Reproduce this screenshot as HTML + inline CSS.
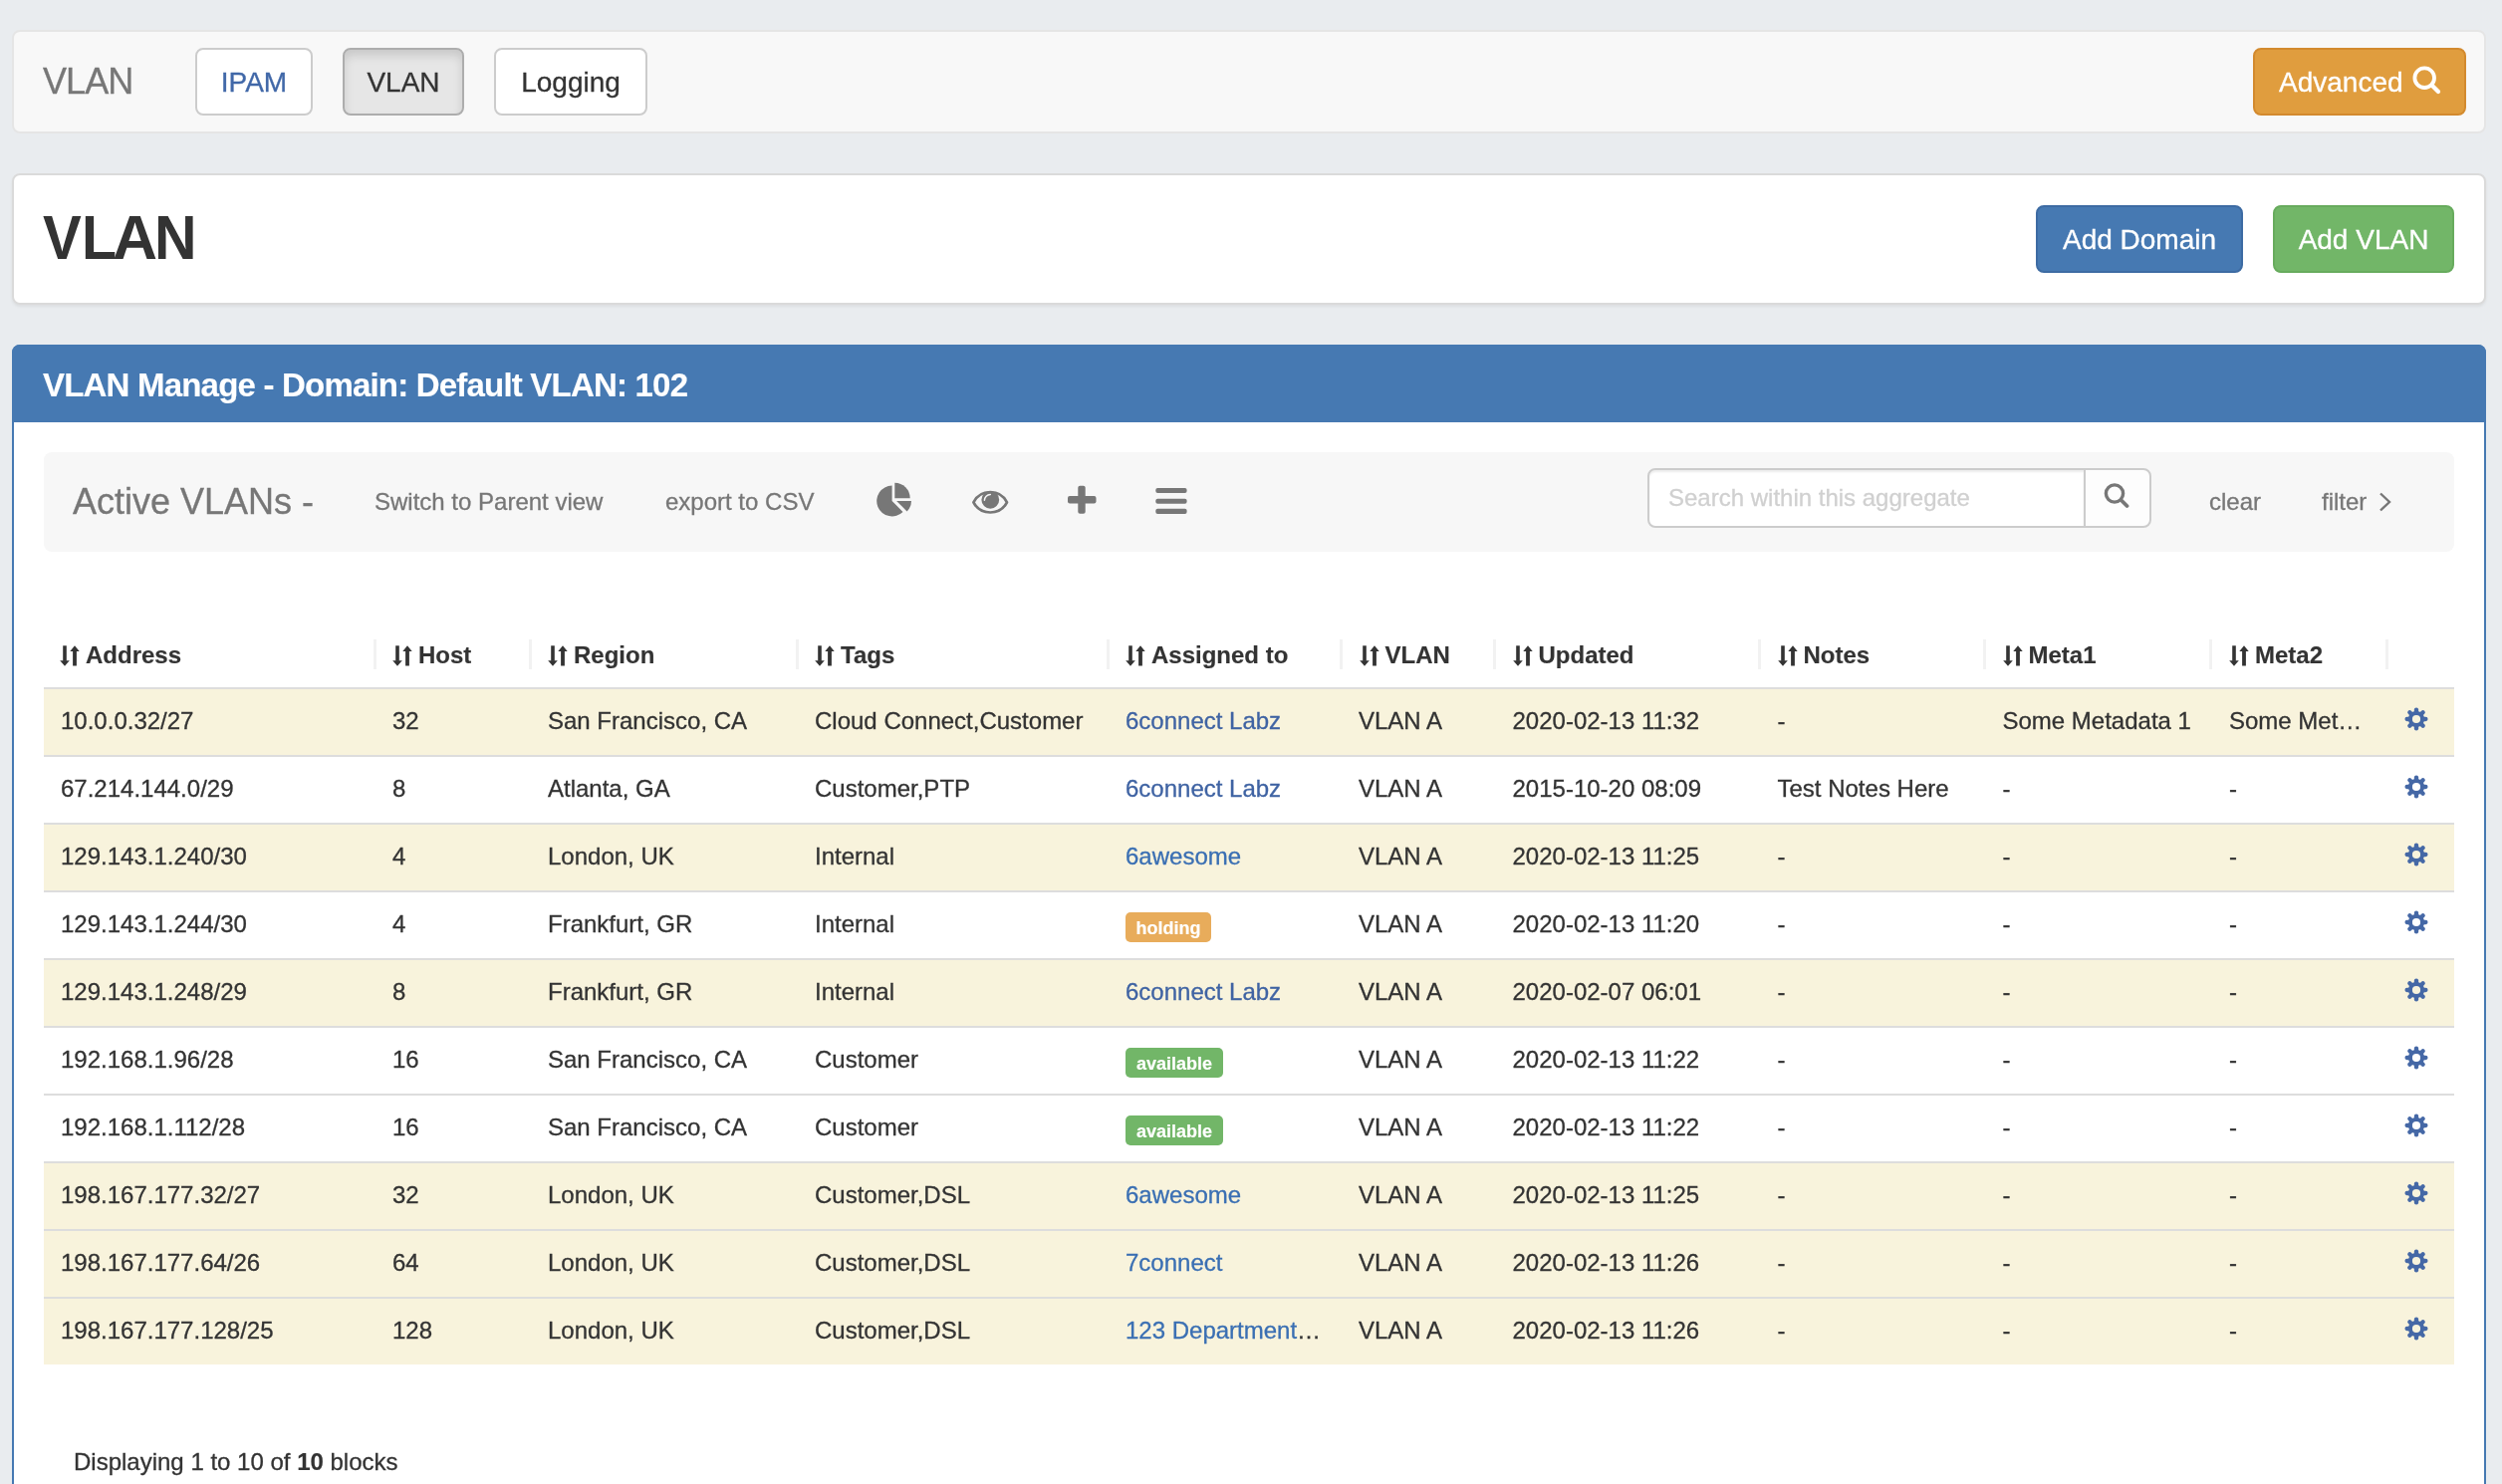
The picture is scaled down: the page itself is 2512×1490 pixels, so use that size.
<!DOCTYPE html>
<html><head><meta charset="utf-8"><title>VLAN</title>
<style>
*{box-sizing:border-box}
html,body{margin:0;padding:0}
body{-webkit-text-stroke:0.3px;will-change:transform;width:2512px;height:1490px;overflow:hidden;background:#e9ecef;font-family:"Liberation Sans",sans-serif;color:#333;position:relative}
.abs{position:absolute}
.t{position:absolute;white-space:nowrap}
.navbar{left:12px;top:30px;width:2484px;height:104px;background:#f8f8f8;border:2px solid #e5e5e5;border-radius:8px}
.brand{left:43px;top:57px;font-size:36px;line-height:50px;color:#777;letter-spacing:-0.9px}
.btn{position:absolute;height:68px;border:2px solid #ccc;border-radius:8px;background:#fff;font-size:28px;line-height:66px;text-align:center;color:#333;white-space:nowrap}
.wellp{left:12px;top:174px;width:2484px;height:132px;background:#fff;border:2px solid #dadada;border-radius:8px;box-shadow:0 2px 3px rgba(0,0,0,.06)}
.h1{top:198px;font-size:63px;line-height:80px;font-weight:bold;color:#333;transform-origin:0 0}
.panel{left:12px;top:346px;width:2484px;height:1300px;background:#fff;border:2px solid #4679b2;border-radius:8px}
.phead{left:12px;top:346px;width:2484px;height:78px;background:#4679b2;border-radius:8px 8px 0 0}
.ptitle{left:43px;top:362px;font-size:33px;line-height:50px;font-weight:bold;color:#fff;letter-spacing:-0.8px}
.toolbar{left:44px;top:454px;width:2420px;height:100px;background:#f7f7f7;border-radius:8px}
.tb{font-size:24px;line-height:40px;color:#777}
.th{position:absolute;white-space:nowrap;font-size:24px;line-height:40px;font-weight:bold;color:#333}
.th .si{position:absolute;left:0;top:9px}
.sep{position:absolute;top:642px;width:3px;height:30px;background:#f2f2f2}
.row{position:absolute;left:44px;width:2420px;height:66px}
.ry{background:#f8f3dc}
.rw{background:#fff}
.rl{position:absolute;left:44px;width:2420px;height:2px;background:#ddd}
.td{position:absolute;white-space:nowrap;font-size:24px;line-height:40px;color:#333}
.lnk{color:#3f63a3}
.lnk2{color:#3a6fb3}
.lbl{position:absolute;height:30px;border-radius:5px;color:#fff;font-weight:bold;font-size:18px;line-height:32px;text-align:center;white-space:nowrap}
.gear{position:absolute}
.th,.ptitle,.lbl,b{-webkit-text-stroke:0.15px}
.h1{-webkit-text-stroke:0}
</style></head>
<body>
<!-- NAVBAR -->
<div class="abs navbar"></div>
<div class="t brand">VLAN</div>
<div class="btn" style="left:196px;top:48px;width:118px;color:#4168a8">IPAM</div>
<div class="btn" style="left:344px;top:48px;width:122px;background:#e6e6e6;border-color:#adadad;box-shadow:inset 0 6px 10px rgba(0,0,0,.125)">VLAN</div>
<div class="btn" style="left:496px;top:48px;width:154px">Logging</div>
<div class="btn" style="left:2262px;top:48px;width:214px;background:#e09d3e;border-color:#d38a2e;color:#fff;text-align:left;padding-left:24px">Advanced</div>

<!-- TITLE WELL -->
<div class="abs wellp"></div>
<div class="t h1" style="left:42.5px;transform:scaleX(0.922)">V</div><div class="t h1" style="left:81.5px;transform:scaleX(0.911)">L</div><div class="t h1" style="left:112.6px;transform:scaleX(0.99)">A</div><div class="t h1" style="left:155.2px;transform:scaleX(0.936)">N</div>
<div class="btn" style="left:2044px;top:206px;width:208px;background:#4679b2;border-color:#3d6ba3;color:#fff">Add Domain</div>
<div class="btn" style="left:2282px;top:206px;width:182px;background:#72b668;border-color:#67ab5d;color:#fff">Add VLAN</div>

<!-- PANEL -->
<div class="abs panel"></div>
<div class="abs phead"></div>
<div class="t ptitle">VLAN Manage - Domain: Default VLAN: 102</div>
<div class="abs toolbar"></div>
<div class="t" style="left:73px;top:479px;font-size:36px;line-height:50px;color:#777">Active VLANs -</div>
<div class="t tb" style="left:376px;top:484px">Switch to Parent view</div>
<div class="t tb" style="left:668px;top:484px">export to CSV</div>

<svg width="0" height="0" style="position:absolute"><defs>
<g id="sorti" fill="#333"><rect x="3.2" y="0.3" width="3.6" height="15.5"/><polygon points="0.2,15.3 9.8,15.3 5,20.8"/><rect x="13.1" y="5.5" width="3.8" height="15"/><polygon points="10.3,5.9 19.7,5.9 15,0.3"/></g>
<g id="geari" stroke="#4568a6" fill="none"><circle cx="12" cy="12" r="6.1" stroke-width="4"/><g stroke-width="4.3" stroke-linecap="round"><line x1="12" y1="5" x2="12" y2="2.6"/><line x1="12" y1="19" x2="12" y2="21.4"/><line x1="5" y1="12" x2="2.6" y2="12"/><line x1="19" y1="12" x2="21.4" y2="12"/><line x1="7.05" y1="7.05" x2="5.35" y2="5.35"/><line x1="16.95" y1="16.95" x2="18.65" y2="18.65"/><line x1="16.95" y1="7.05" x2="18.65" y2="5.35"/><line x1="7.05" y1="16.95" x2="5.35" y2="18.65"/></g></g>
</defs></svg>
<!-- TOOLBAR ICONS -->
<svg class="abs" style="left:878px;top:483px" width="40" height="38" viewBox="0 0 40 38">
 <path fill="#777" d="M17.6,20 L17.6,4.6 A15.4,15.4 0 1 0 28.5,30.9 Z"/>
 <path fill="#777" d="M20.3,17.2 L20.3,1.8 A15.4,15.4 0 0 1 35.7,17.2 Z"/>
 <path fill="#777" d="M22.1,19.9 L37,19.9 A14.9,14.9 0 0 1 32.6,30.4 Z"/>
</svg>
<svg class="abs" style="left:974px;top:490px" width="40" height="28" viewBox="0 0 40 28">
 <path fill="none" stroke="#777" stroke-width="2.7" stroke-linejoin="round" d="M3.4,14.3 C10.5,0.8 30,0.8 37,14.3 C30,27.9 10.5,27.9 3.4,14.3 Z"/>
 <circle cx="20.3" cy="11.8" r="8.9" fill="#777"/>
 <path fill="none" stroke="#f7f7f7" stroke-width="1.5" stroke-linecap="round" d="M14.4,12.3 A6,6 0 0 1 20.3,6.4"/>
</svg>
<svg class="abs" style="left:1070px;top:486px" width="32" height="32" viewBox="0 0 32 32">
 <rect x="12.3" y="1.7" width="7.4" height="28" rx="2" fill="#777"/>
 <rect x="2" y="12" width="28.5" height="7.6" rx="2" fill="#777"/>
</svg>
<svg class="abs" style="left:1158px;top:488px" width="36" height="30" viewBox="0 0 36 30">
 <rect x="2.3" y="2" width="31.3" height="5.1" rx="2" fill="#777"/>
 <rect x="2.3" y="12.7" width="31.3" height="5" rx="2" fill="#777"/>
 <rect x="2.3" y="22.8" width="31.3" height="5.1" rx="2" fill="#777"/>
</svg>
<!-- SEARCH -->
<div class="abs" style="left:1654px;top:470px;width:440px;height:60px;background:#fff;border:2px solid #ccc;border-radius:8px 0 0 8px;box-shadow:inset 0 2px 2px rgba(0,0,0,.075)"></div>
<div class="t" style="left:1675px;top:480px;font-size:24px;line-height:40px;color:#d0d0d0">Search within this aggregate</div>
<div class="abs" style="left:2092px;top:470px;width:68px;height:60px;background:#fdfdfd;border:2px solid #ccc;border-radius:0 8px 8px 0"></div>
<svg class="abs" style="left:2110px;top:483px" width="32" height="30" viewBox="0 0 32 30">
 <circle cx="13" cy="12.5" r="8.6" fill="none" stroke="#777" stroke-width="3.4"/>
 <line x1="19.5" y1="19" x2="25.5" y2="25" stroke="#777" stroke-width="3.8" stroke-linecap="round"/>
</svg>
<div class="t tb" style="left:2218px;top:484px">clear</div>
<div class="t tb" style="left:2331px;top:484px">filter</div>
<svg class="abs" style="left:2386px;top:492px" width="18" height="24" viewBox="0 0 18 24">
 <polyline points="4,3.5 13,12 4,20.5" fill="none" stroke="#777" stroke-width="2.4"/>
</svg>
<!-- ADV ICON -->
<svg class="abs" style="left:2419px;top:63px" width="36" height="36" viewBox="0 0 36 36">
 <circle cx="15.2" cy="15.2" r="9.8" fill="none" stroke="#fff" stroke-width="3.8"/>
 <line x1="22.5" y1="22.5" x2="29" y2="29" stroke="#fff" stroke-width="4.2" stroke-linecap="round"/>
</svg>
<!--TABLE-->
<div class="th" style="left:61px;top:638px"><svg class="si" width="20" height="21" viewBox="0 0 20 21" style="left:-1px;top:10px"><use href="#sorti"/></svg><span style="margin-left:25px">Address</span></div>
<div class="th" style="left:395px;top:638px"><svg class="si" width="20" height="21" viewBox="0 0 20 21" style="left:-1px;top:10px"><use href="#sorti"/></svg><span style="margin-left:25px">Host</span></div>
<div class="th" style="left:551px;top:638px"><svg class="si" width="20" height="21" viewBox="0 0 20 21" style="left:-1px;top:10px"><use href="#sorti"/></svg><span style="margin-left:25px">Region</span></div>
<div class="th" style="left:819px;top:638px"><svg class="si" width="20" height="21" viewBox="0 0 20 21" style="left:-1px;top:10px"><use href="#sorti"/></svg><span style="margin-left:25px">Tags</span></div>
<div class="th" style="left:1131px;top:638px"><svg class="si" width="20" height="21" viewBox="0 0 20 21" style="left:-1px;top:10px"><use href="#sorti"/></svg><span style="margin-left:25px">Assigned to</span></div>
<div class="th" style="left:1365.5px;top:638px"><svg class="si" width="20" height="21" viewBox="0 0 20 21" style="left:-1px;top:10px"><use href="#sorti"/></svg><span style="margin-left:25px">VLAN</span></div>
<div class="th" style="left:1519.5px;top:638px"><svg class="si" width="20" height="21" viewBox="0 0 20 21" style="left:-1px;top:10px"><use href="#sorti"/></svg><span style="margin-left:25px">Updated</span></div>
<div class="th" style="left:1785.5px;top:638px"><svg class="si" width="20" height="21" viewBox="0 0 20 21" style="left:-1px;top:10px"><use href="#sorti"/></svg><span style="margin-left:25px">Notes</span></div>
<div class="th" style="left:2011.5px;top:638px"><svg class="si" width="20" height="21" viewBox="0 0 20 21" style="left:-1px;top:10px"><use href="#sorti"/></svg><span style="margin-left:25px">Meta1</span></div>
<div class="th" style="left:2239px;top:638px"><svg class="si" width="20" height="21" viewBox="0 0 20 21" style="left:-1px;top:10px"><use href="#sorti"/></svg><span style="margin-left:25px">Meta2</span></div>
<div class="sep" style="left:375px"></div>
<div class="sep" style="left:530.5px"></div>
<div class="sep" style="left:798.6px"></div>
<div class="sep" style="left:1110.6px"></div>
<div class="sep" style="left:1344.6px"></div>
<div class="sep" style="left:1498.7px"></div>
<div class="sep" style="left:1764.5px"></div>
<div class="sep" style="left:1990.5px"></div>
<div class="sep" style="left:2218.3px"></div>
<div class="sep" style="left:2394.5px"></div>
<div class="abs" style="left:44px;top:690px;width:2420px;height:2px;background:#ddd"></div>
<div class="row ry" style="top:692px"></div>
<div class="td" style="left:61px;top:704px">10.0.0.32/27</div>
<div class="td" style="left:394px;top:704px">32</div>
<div class="td" style="left:550px;top:704px">San Francisco, CA</div>
<div class="td" style="left:818px;top:704px">Cloud Connect,Customer</div>
<div class="td lnk" style="left:1130px;top:704px">6connect Labz</div>
<div class="td" style="left:1364px;top:704px">VLAN A</div>
<div class="td" style="left:1518.5px;top:704px">2020-02-13 11:32</div>
<div class="td" style="left:1784.5px;top:704px">-</div>
<div class="td" style="left:2010.5px;top:704px">Some Metadata 1</div>
<div class="td" style="left:2238px;top:704px">Some Met…</div>
<svg class="gear" style="left:2414px;top:710px" width="24" height="24" viewBox="0 0 24 24"><use href="#geari"/></svg>
<div class="row rw" style="top:760px"></div>
<div class="rl" style="top:758px"></div>
<div class="td" style="left:61px;top:772px">67.214.144.0/29</div>
<div class="td" style="left:394px;top:772px">8</div>
<div class="td" style="left:550px;top:772px">Atlanta, GA</div>
<div class="td" style="left:818px;top:772px">Customer,PTP</div>
<div class="td lnk" style="left:1130px;top:772px">6connect Labz</div>
<div class="td" style="left:1364px;top:772px">VLAN A</div>
<div class="td" style="left:1518.5px;top:772px">2015-10-20 08:09</div>
<div class="td" style="left:1784.5px;top:772px">Test Notes Here</div>
<div class="td" style="left:2010.5px;top:772px">-</div>
<div class="td" style="left:2238px;top:772px">-</div>
<svg class="gear" style="left:2414px;top:778px" width="24" height="24" viewBox="0 0 24 24"><use href="#geari"/></svg>
<div class="row ry" style="top:828px"></div>
<div class="rl" style="top:826px"></div>
<div class="td" style="left:61px;top:840px">129.143.1.240/30</div>
<div class="td" style="left:394px;top:840px">4</div>
<div class="td" style="left:550px;top:840px">London, UK</div>
<div class="td" style="left:818px;top:840px">Internal</div>
<div class="td lnk2" style="left:1130px;top:840px">6awesome</div>
<div class="td" style="left:1364px;top:840px">VLAN A</div>
<div class="td" style="left:1518.5px;top:840px">2020-02-13 11:25</div>
<div class="td" style="left:1784.5px;top:840px">-</div>
<div class="td" style="left:2010.5px;top:840px">-</div>
<div class="td" style="left:2238px;top:840px">-</div>
<svg class="gear" style="left:2414px;top:846px" width="24" height="24" viewBox="0 0 24 24"><use href="#geari"/></svg>
<div class="row rw" style="top:896px"></div>
<div class="rl" style="top:894px"></div>
<div class="td" style="left:61px;top:908px">129.143.1.244/30</div>
<div class="td" style="left:394px;top:908px">4</div>
<div class="td" style="left:550px;top:908px">Frankfurt, GR</div>
<div class="td" style="left:818px;top:908px">Internal</div>
<div class="lbl" style="left:1130px;top:916px;width:86px;background:#e8ac5b">holding</div>
<div class="td" style="left:1364px;top:908px">VLAN A</div>
<div class="td" style="left:1518.5px;top:908px">2020-02-13 11:20</div>
<div class="td" style="left:1784.5px;top:908px">-</div>
<div class="td" style="left:2010.5px;top:908px">-</div>
<div class="td" style="left:2238px;top:908px">-</div>
<svg class="gear" style="left:2414px;top:914px" width="24" height="24" viewBox="0 0 24 24"><use href="#geari"/></svg>
<div class="row ry" style="top:964px"></div>
<div class="rl" style="top:962px"></div>
<div class="td" style="left:61px;top:976px">129.143.1.248/29</div>
<div class="td" style="left:394px;top:976px">8</div>
<div class="td" style="left:550px;top:976px">Frankfurt, GR</div>
<div class="td" style="left:818px;top:976px">Internal</div>
<div class="td lnk" style="left:1130px;top:976px">6connect Labz</div>
<div class="td" style="left:1364px;top:976px">VLAN A</div>
<div class="td" style="left:1518.5px;top:976px">2020-02-07 06:01</div>
<div class="td" style="left:1784.5px;top:976px">-</div>
<div class="td" style="left:2010.5px;top:976px">-</div>
<div class="td" style="left:2238px;top:976px">-</div>
<svg class="gear" style="left:2414px;top:982px" width="24" height="24" viewBox="0 0 24 24"><use href="#geari"/></svg>
<div class="row rw" style="top:1032px"></div>
<div class="rl" style="top:1030px"></div>
<div class="td" style="left:61px;top:1044px">192.168.1.96/28</div>
<div class="td" style="left:394px;top:1044px">16</div>
<div class="td" style="left:550px;top:1044px">San Francisco, CA</div>
<div class="td" style="left:818px;top:1044px">Customer</div>
<div class="lbl" style="left:1130px;top:1052px;width:98px;background:#72b668">available</div>
<div class="td" style="left:1364px;top:1044px">VLAN A</div>
<div class="td" style="left:1518.5px;top:1044px">2020-02-13 11:22</div>
<div class="td" style="left:1784.5px;top:1044px">-</div>
<div class="td" style="left:2010.5px;top:1044px">-</div>
<div class="td" style="left:2238px;top:1044px">-</div>
<svg class="gear" style="left:2414px;top:1050px" width="24" height="24" viewBox="0 0 24 24"><use href="#geari"/></svg>
<div class="row rw" style="top:1100px"></div>
<div class="rl" style="top:1098px"></div>
<div class="td" style="left:61px;top:1112px">192.168.1.112/28</div>
<div class="td" style="left:394px;top:1112px">16</div>
<div class="td" style="left:550px;top:1112px">San Francisco, CA</div>
<div class="td" style="left:818px;top:1112px">Customer</div>
<div class="lbl" style="left:1130px;top:1120px;width:98px;background:#72b668">available</div>
<div class="td" style="left:1364px;top:1112px">VLAN A</div>
<div class="td" style="left:1518.5px;top:1112px">2020-02-13 11:22</div>
<div class="td" style="left:1784.5px;top:1112px">-</div>
<div class="td" style="left:2010.5px;top:1112px">-</div>
<div class="td" style="left:2238px;top:1112px">-</div>
<svg class="gear" style="left:2414px;top:1118px" width="24" height="24" viewBox="0 0 24 24"><use href="#geari"/></svg>
<div class="row ry" style="top:1168px"></div>
<div class="rl" style="top:1166px"></div>
<div class="td" style="left:61px;top:1180px">198.167.177.32/27</div>
<div class="td" style="left:394px;top:1180px">32</div>
<div class="td" style="left:550px;top:1180px">London, UK</div>
<div class="td" style="left:818px;top:1180px">Customer,DSL</div>
<div class="td lnk2" style="left:1130px;top:1180px">6awesome</div>
<div class="td" style="left:1364px;top:1180px">VLAN A</div>
<div class="td" style="left:1518.5px;top:1180px">2020-02-13 11:25</div>
<div class="td" style="left:1784.5px;top:1180px">-</div>
<div class="td" style="left:2010.5px;top:1180px">-</div>
<div class="td" style="left:2238px;top:1180px">-</div>
<svg class="gear" style="left:2414px;top:1186px" width="24" height="24" viewBox="0 0 24 24"><use href="#geari"/></svg>
<div class="row ry" style="top:1236px"></div>
<div class="rl" style="top:1234px"></div>
<div class="td" style="left:61px;top:1248px">198.167.177.64/26</div>
<div class="td" style="left:394px;top:1248px">64</div>
<div class="td" style="left:550px;top:1248px">London, UK</div>
<div class="td" style="left:818px;top:1248px">Customer,DSL</div>
<div class="td lnk2" style="left:1130px;top:1248px">7connect</div>
<div class="td" style="left:1364px;top:1248px">VLAN A</div>
<div class="td" style="left:1518.5px;top:1248px">2020-02-13 11:26</div>
<div class="td" style="left:1784.5px;top:1248px">-</div>
<div class="td" style="left:2010.5px;top:1248px">-</div>
<div class="td" style="left:2238px;top:1248px">-</div>
<svg class="gear" style="left:2414px;top:1254px" width="24" height="24" viewBox="0 0 24 24"><use href="#geari"/></svg>
<div class="row ry" style="top:1304px"></div>
<div class="rl" style="top:1302px"></div>
<div class="td" style="left:61px;top:1316px">198.167.177.128/25</div>
<div class="td" style="left:394px;top:1316px">128</div>
<div class="td" style="left:550px;top:1316px">London, UK</div>
<div class="td" style="left:818px;top:1316px">Customer,DSL</div>
<div class="td" style="left:1130px;top:1316px"><span class="lnk2">123 Department</span>…</div>
<div class="td" style="left:1364px;top:1316px">VLAN A</div>
<div class="td" style="left:1518.5px;top:1316px">2020-02-13 11:26</div>
<div class="td" style="left:1784.5px;top:1316px">-</div>
<div class="td" style="left:2010.5px;top:1316px">-</div>
<div class="td" style="left:2238px;top:1316px">-</div>
<svg class="gear" style="left:2414px;top:1322px" width="24" height="24" viewBox="0 0 24 24"><use href="#geari"/></svg>
<!--/TABLE-->
<div class="td" style="left:74px;top:1448px">Displaying 1 to 10 of <b>10</b> blocks</div>
</body></html>
